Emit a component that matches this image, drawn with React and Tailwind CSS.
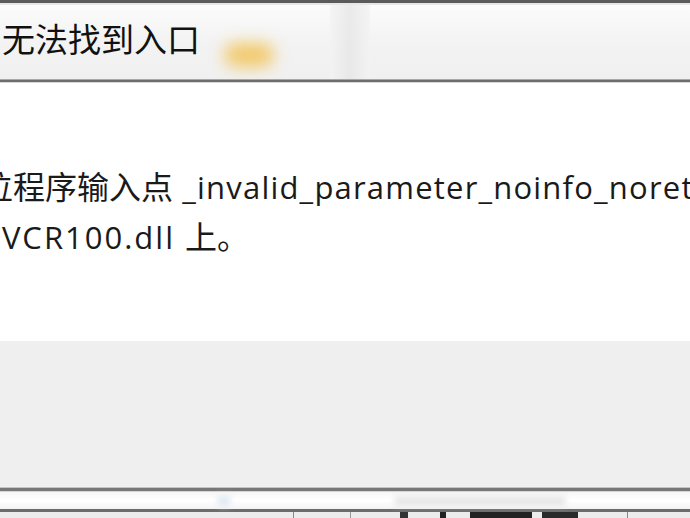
export default function App() {
  const ff = { fontFamily: '"Open Sans", "Noto Sans CJK SC", sans-serif' };
  return (
    <div className="w-[690px] h-[518px] overflow-hidden flex flex-col bg-white relative" style={ff}>
      {/* top dark edge */}
      <div className="h-[3px] bg-[#5a5a5a] shrink-0" />
      <div className="h-[2px] bg-[#e6e6e6] shrink-0" />
      {/* title bar */}
      <div className="h-[74px] shrink-0 relative bg-gradient-to-b from-[#fbfbfb] via-[#f3f3f3] to-[#f0f0f0] flex items-center pb-[6px] overflow-hidden">
        <div className="absolute left-[330px] top-0 bottom-0 w-[40px] bg-gradient-to-r from-[#f3f3f3] via-[#e6e6e6] to-[#f3f3f3] opacity-80" />
        <div className="absolute left-[224px] top-[38px] w-[50px] h-[24px] rounded-full bg-[#f2c04a] blur-[8px] opacity-80" />
        <span className="relative pl-[2px] text-[33px] leading-none text-[#111] whitespace-nowrap">无法找到入口</span>
      </div>
      {/* title bottom border */}
      <div className="h-[1px] bg-[#a8a8a8] shrink-0" />
      <div className="h-[2px] bg-[#6e6e6e] shrink-0" />
      <div className="h-[1px] bg-[#d8d8d8] shrink-0" />
      {/* content */}
      <div className="h-[258px] shrink-0 bg-white text-[#1a1a1a] text-[31px] leading-[49px] whitespace-nowrap pt-[79px]">
        <div className="-ml-[19px]">
          <span className="text-[32px]">位程序输入点</span>
          <span className="tracking-[1.2px]"> _invalid_parameter_noinfo_noreturn</span>
          <span className="text-[32px]"> 于动态链接库</span>
        </div>
        <div className="-ml-[47px]">
          <span className="tracking-[2px]">MSVCR100.dll </span>
          <span className="text-[32px]">上。</span>
        </div>
      </div>
      {/* button area */}
      <div className="h-[146px] shrink-0 bg-[#efefef]" />
      {/* bottom edge */}
      <div className="h-[1px] bg-[#c4c4c4] shrink-0" />
      <div className="h-[3px] bg-[#777] shrink-0" />
      <div className="h-[1px] bg-[#d6d6d6] shrink-0" />
      <div className="h-[17px] shrink-0 bg-gradient-to-b from-[#f6f6f6] via-white to-[#f4f4f4] relative">
        <div className="absolute left-[395px] top-[5px] w-[170px] h-[8px] bg-[#e2e2e2] blur-[3px]" />
        <div className="absolute left-[218px] top-[4px] w-[12px] h-[10px] bg-[#dfe8f4] blur-[3px]" />
      </div>
      <div className="h-[3px] bg-[#6c6c6c] shrink-0" />
      <div className="flex-1 bg-[#ececec] relative">
        <div className="absolute left-[293px] top-0 w-[1px] h-full bg-[#888]" />
        <div className="absolute left-[350px] top-0 w-[1px] h-full bg-[#999]" />
        <div className="absolute left-[400px] top-0 w-[8px] h-full bg-[#333]" />
        <div className="absolute left-[440px] top-0 w-[6px] h-full bg-[#222]" />
        <div className="absolute left-[470px] top-0 w-[62px] h-full bg-[#222]" />
        <div className="absolute left-[542px] top-0 w-[36px] h-full bg-[#2a2a2a]" />
        <div className="absolute left-[627px] top-0 w-[1px] h-full bg-[#888]" />
      </div>
    </div>
  );
}
